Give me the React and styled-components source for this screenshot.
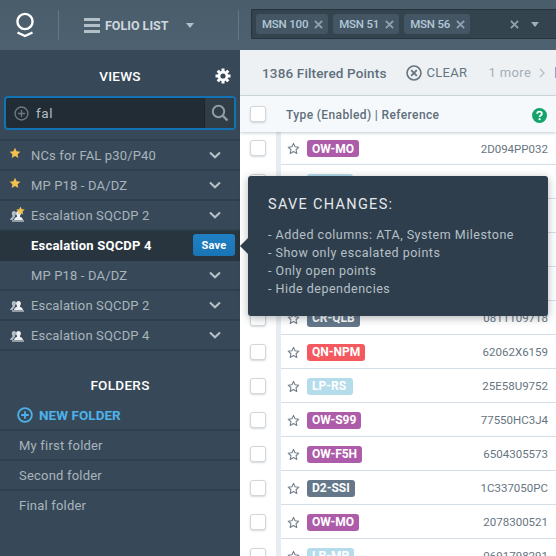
import React from 'react';
import styled, { createGlobalStyle } from 'styled-components';

const GlobalStyle = createGlobalStyle`
  html, body { margin: 0; padding: 0; height: 100%; overflow: hidden; }
  body { font-family: Roboto, "Liberation Sans", sans-serif; background: #fff; }
`;

const Shell = styled.div`
  position: relative;
  width: 556px;
  height: 556px;
  overflow: hidden;
  display: flex;
  flex-direction: column;
`;

/* top bar */
const TopBar = styled.header`
  height: 50px;
  flex: none;
  display: flex;
  align-items: center;
  background: linear-gradient(#4a5d6b, #4e6170);
`;
const LogoCell = styled.div`
  width: 59px;
  height: 30px;
  flex: none;
  display: flex;
  align-items: center;
  padding-left: 15px;
  box-sizing: border-box;
  border-right: 1px solid #647683;
`;
const FolioCell = styled.div`
  width: 180px;
  height: 30px;
  flex: none;
  box-sizing: border-box;
  display: flex;
  align-items: center;
  padding-left: 25px;
  border-right: 1px solid #647683;
`;
const Burger = styled.span`
  width: 16px;
  height: 15px;
  flex: none;
  background: linear-gradient(#b4c0c9 3px, transparent 3px 6px, #b4c0c9 6px 9px, transparent 9px 12px, #b4c0c9 12px);
`;
const FolioLabel = styled.span`
  margin-left: 5px;
  font-size: 12.5px;
  font-weight: 700;
  color: #cfd8df;
  white-space: nowrap;
`;
const Caret = styled.span`
  width: 0;
  height: 0;
  flex: none;
  border-left: 4px solid transparent;
  border-right: 4px solid transparent;
  border-top: 5px solid ${p => p.$color || '#b4c0c9'};
  margin-left: ${p => p.$gap || 0}px;
`;
const MultiSelect = styled.div`
  margin-left: 12px;
  flex: 1;
  height: 30px;
  box-sizing: border-box;
  margin-top: -2px;
  display: flex;
  align-items: center;
  gap: 5px;
  padding-left: 4px;
  background: #34444f;
  border: 1px solid #27343e;
  border-right: none;
  border-radius: 2px 0 0 2px;
`;
const Chip = styled.span`
  height: 20px;
  display: flex;
  align-items: center;
  gap: 6px;
  padding: 0 5px 0 6px;
  border-radius: 3px;
  background: #445664;
  color: #b3c8d8;
  font-size: 11.5px;
  font-weight: 500;
  letter-spacing: -0.2px;
  white-space: nowrap;
`;
const ClearAll = styled.span`
  display: flex;
  margin-left: 35px;
`;

/* body */
const Body = styled.div`
  flex: 1;
  min-height: 0;
  display: flex;
`;
const Sidebar = styled.aside`
  width: 240px;
  flex: none;
  background: #374958;
  display: flex;
  flex-direction: column;
`;
const SideHead = styled.div`
  height: 46px;
  flex: none;
  box-sizing: border-box;
  position: relative;
  display: flex;
  align-items: center;
  justify-content: center;
  padding-top: 6px;
  color: #fff;
  font-size: 13.5px;
  font-weight: 500;
  letter-spacing: 0.3px;
`;
const GearSlot = styled.span`
  position: absolute;
  left: 215px;
  top: 18px;
  display: flex;
`;
const Search = styled.div`
  height: 34px;
  margin: 0 4px;
  box-sizing: border-box;
  flex: none;
  display: flex;
  align-items: center;
  border: 2px solid #1272b3;
  border-radius: 4px;
  background: #212c35;
  overflow: hidden;
`;
const SearchText = styled.span`
  flex: 1;
  margin-left: 8px;
  display: flex;
  align-items: center;
  gap: 7px;
  color: #b3bcc3;
  font-size: 13.5px;
  letter-spacing: 0.6px;
`;
const SearchButton = styled.span`
  width: 29px;
  height: 30px;
  display: flex;
  align-items: center;
  justify-content: center;
  background: #303d47;
  border-left: 1px solid #1d272f;
`;
const Views = styled.div`
  margin-top: 9px;
  border-top: 2px solid #2f404d;
  flex: none;
`;
const ViewRow = styled.div`
  height: 30px;
  box-sizing: border-box;
  display: flex;
  align-items: center;
  position: relative;
  padding-left: 31px;
  border-bottom: 2px solid ${p => (p.$active ? '#28353f' : '#2f404d')};
  background: ${p => (p.$active ? '#28353f' : 'transparent')};
  color: ${p => (p.$active ? '#fff' : '#a9b4bc')};
  font-size: 13px;
  font-weight: ${p => (p.$active ? 700 : 400)};
  letter-spacing: ${p => (p.$active ? 0.22 : 0.15)}px;
  white-space: nowrap;
`;
const ViewIcon = styled.span`
  position: absolute;
  left: 9px;
  top: 6px;
  width: 16px;
  height: 16px;
  display: flex;
`;
const Chevron = styled.span`
  position: absolute;
  left: 209px;
  top: 10px;
  display: flex;
`;
const SaveButton = styled.span`
  position: absolute;
  left: 193px;
  top: 3px;
  width: 42px;
  height: 22px;
  border-radius: 3px;
  display: flex;
  align-items: center;
  justify-content: center;
  background: linear-gradient(#2081c4, #1a74b4);
  color: #fff;
  font-size: 11px;
  font-weight: 700;
  letter-spacing: 0.2px;
`;
const FolderHead = styled(SideHead)`
  margin-top: 20px;
  height: 30px;
  padding: 0 0 2px;
`;
const NewFolder = styled.div`
  height: 30px;
  box-sizing: border-box;
  display: flex;
  align-items: center;
  gap: 6px;
  padding-left: 17px;
  border-bottom: 2px solid #2f404d;
  color: #4db2ea;
  font-size: 13.5px;
  font-weight: 700;
  letter-spacing: 0.05px;
`;
const FolderRow = styled.div`
  height: 30px;
  box-sizing: border-box;
  display: flex;
  align-items: center;
  padding-left: 19px;
  border-bottom: 2px solid ${p => (p.$last ? 'transparent' : '#2f404d')};
  color: #a9b4bc;
  font-size: 13px;
  letter-spacing: 0.2px;
`;

/* list */
const Main = styled.main`
  flex: 1;
  min-width: 0;
  display: flex;
  flex-direction: column;
`;
const Toolbar = styled.div`
  height: 46px;
  flex: none;
  box-sizing: border-box;
  display: flex;
  align-items: center;
  padding-left: 22px;
  background: #edf1f4;
  border-bottom: 1px solid #d3dce3;
  white-space: nowrap;
  overflow: hidden;
`;
const Count = styled.span`
  font-size: 13.5px;
  font-weight: 500;
  color: #5f6f7c;
  letter-spacing: 0.15px;
`;
const ClearIcon = styled.span`
  display: flex;
  margin-left: 19px;
`;
const ClearLabel = styled.span`
  margin-left: 5px;
  font-size: 13px;
  color: #66757f;
  letter-spacing: 0.3px;
`;
const More = styled.span`
  margin-left: 21px;
  font-size: 13px;
  color: #a3afb8;
  letter-spacing: 0.4px;
`;
const MoreArrow = styled.span`
  display: flex;
  margin-left: 8px;
`;
const MoreLink = styled.span`
  margin-left: 9px;
  font-size: 14px;
  font-weight: 500;
  color: #1c8ad0;
`;
const HeadRow = styled.div`
  height: 36px;
  flex: none;
  display: flex;
  align-items: center;
  position: relative;
  z-index: 1;
  background: #f6f9fb;
  box-shadow: 0 1px 3px rgba(60, 80, 95, 0.3);
`;
const Check = styled.span`
  width: 14px;
  height: 14px;
  flex: none;
  margin: -1px 0 0 10px;
  background: #fff;
  border: 1px solid #d2d7db;
  border-radius: 3px;
  box-shadow: 0 1px 2px rgba(60, 80, 95, 0.22);
`;
const HeadLabel = styled.span`
  margin: 2px 0 0 20px;
  flex: 1;
  font-size: 12px;
  font-weight: 500;
  color: #5f6f7c;
  letter-spacing: 0.38px;
  white-space: nowrap;
`;
const Help = styled.span`
  display: flex;
  margin: 2px 9px 0 0;
`;
const Rows = styled.div`
  flex: 1;
  overflow: hidden;
`;
const Row = styled.div`
  height: 34px;
  display: flex;
  align-items: center;
  &:first-child { height: 33px; }
`;
const Strip = styled.span`
  width: 5px;
  align-self: stretch;
  flex: none;
  margin-left: 10px;
  background: #e6ecf1;
`;
const RowBody = styled.div`
  flex: 1;
  align-self: stretch;
  min-width: 0;
  box-sizing: border-box;
  display: flex;
  align-items: center;
  padding: 1px 8px 0 6px;
  border-bottom: 1px solid #d5dee6;
`;
const StarSlot = styled.span`
  display: flex;
  margin-right: 7px;
`;
const Tag = styled.span`
  height: 17px;
  min-width: 46px;
  box-sizing: border-box;
  display: flex;
  align-items: center;
  padding: 0 5px;
  border-radius: 3px;
  background: ${p => p.$bg};
  color: #fff;
  font-size: 12px;
  font-weight: 700;
`;
const Code = styled.span`
  margin-left: auto;
  font-size: 11.5px;
  color: #67757f;
`;

/* tooltip */
const Tip = styled.div`
  position: absolute;
  left: 248px;
  top: 176px;
  width: 300px;
  height: 140px;
  box-sizing: border-box;
  z-index: 3;
  padding: 19px 20px;
  border-radius: 3px;
  background: #2f3e4c;
  box-shadow: 0 2px 8px rgba(30, 40, 50, 0.35);
  color: #b6c0c8;
  font-size: 12.5px;
  line-height: 18px;
  letter-spacing: 0.5px;
  &::before {
    content: '';
    position: absolute;
    left: -8px;
    top: 62px;
    border-top: 8px solid transparent;
    border-bottom: 8px solid transparent;
    border-right: 8px solid #2f3e4c;
  }
`;
const TipTitle = styled.div`
  font-size: 14.5px;
  line-height: 20px;
  color: #e4e9ed;
  letter-spacing: 1.3px;
  margin-bottom: 11px;
`;

const Logo = () => (
  <svg width="22" height="26" viewBox="0 0 22 26" fill="none" stroke="#fff">
    <circle cx="10" cy="9.5" r="7.6" strokeWidth="2.4" />
    <path d="M2.5 20.5 L10 24 L17.5 20.5" strokeWidth="2.4" />
  </svg>
);
const Cross = ({ size = 9, color = '#8ea0ae' }) => (
  <svg width={size} height={size} viewBox="0 0 10 10" stroke={color} strokeWidth="2.2">
    <path d="M1 1 L9 9 M9 1 L1 9" />
  </svg>
);
const Gear = () => (
  <svg width="16" height="16" viewBox="0 0 16 16" fill="none" stroke="#fff">
    <circle cx="8" cy="8" r="4" strokeWidth="2.8" />
    <path d="M8 0.5V3 M8 13V15.5 M0.5 8H3 M13 8H15.5 M2.7 2.7L4.4 4.4 M11.6 11.6L13.3 13.3 M13.3 2.7L11.6 4.4 M4.4 11.6L2.7 13.3" strokeWidth="3" />
  </svg>
);
const PlusCircle = ({ size = 15, color = '#6c7881', width = 1.5 }) => (
  <svg width={size} height={size} viewBox="0 0 16 16" fill="none" stroke={color} strokeWidth={width}>
    <circle cx="8" cy="8" r="6.9" />
    <path d="M8 4.2V11.8 M4.2 8H11.8" />
  </svg>
);
const Glass = () => (
  <svg width="18" height="18" viewBox="0 0 18 18" fill="none" stroke="#8f9ca6" strokeWidth="2">
    <circle cx="7.5" cy="7.5" r="5.7" />
    <path d="M11.7 11.7L16.5 16.5" strokeWidth="2.4" />
  </svg>
);
const Star = ({ size = 11, color = '#f2c14e' }) => (
  <svg width={size} height={size} viewBox="0 0 24 24" fill={color}>
    <path d="M12 1.5l3.2 6.9 7.5.9-5.5 5.1 1.4 7.4L12 18.1l-6.6 3.7 1.4-7.4L1.300 9.300l7.500-.9z" />
  </svg>
);
const OutlineStar = () => (
  <svg width="13" height="13" viewBox="0 0 24 24" fill="none" stroke="#6f7e8b" strokeWidth="2" strokeLinejoin="round">
    <path d="M12 2.500l2.900 6.300 6.900.8-5.100 4.700 1.400 6.800-6.100-3.400-6.100 3.400 1.400-6.800-5.100-4.700 6.900-.8z" />
  </svg>
);
const People = ({ star }) => (
  <svg width="16" height="16" viewBox="0 0 16 16">
    <path fill="#b5bec5" d="M5 4c1.400 0 2 1 2 2.200 0 1-.5 1.800-1 2.300v1L3.500 13H1c.4-1.500 1.400-2.300 2.400-3V8.500C3 8 2.800 7.200 2.800 6.200 2.800 5 3.600 4 5 4z" />
    <path fill="#eef1f3" d="M9.500 4c1.500 0 2.400 1.100 2.400 2.500 0 1-.4 1.800-.9 2.300v1c1.300.5 2.700 1.100 3 3.200H5c.3-2.100 1.700-2.700 3-3.200v-1c-.5-.5-.9-1.300-.9-2.300C7.100 5.100 8 4 9.500 4z" />
    <path fill="#eef1f3" d="M3 13.500h12v1H3z" />
    {star && (
      <path fill="#f2c14e" d="M11.500-.500l1.300 2.700 3 .4-2.200 2 .6 3-2.700-1.500-2.700 1.500.6-3-2.200-2 3-.4z" />
    )}
  </svg>
);
const Down = () => (
  <svg width="12" height="8" viewBox="0 0 12 8" fill="none" stroke="#b7c1c8" strokeWidth="2">
    <path d="M1 1.500L6 6.300L11 1.500" />
  </svg>
);
const CircleX = () => (
  <svg width="16" height="16" viewBox="0 0 17 17" fill="none" stroke="#66757f" strokeWidth="1.700">
    <circle cx="8.500" cy="8.500" r="7.400" />
    <path d="M5.500 5.500L11.500 11.500 M11.500 5.500L5.500 11.500" strokeWidth="2" />
  </svg>
);
const Right = () => (
  <svg width="6" height="10" viewBox="0 0 6 10" fill="none" stroke="#b4bec6" strokeWidth="1.300">
    <path d="M1 1L5 5L1 9" />
  </svg>
);
const HelpIcon = () => (
  <svg width="15" height="15" viewBox="0 0 15 15">
    <circle cx="7.500" cy="7.500" r="7.500" fill="#14a36b" />
    <path d="M5.200 5.800C5.200 4.500 6.200 3.700 7.500 3.700C8.900 3.700 9.900 4.500 9.900 5.700C9.900 7.300 7.600 7.300 7.600 9" fill="none" stroke="#fff" strokeWidth="1.800" />
    <circle cx="7.600" cy="11.200" r="1.100" fill="#fff" />
  </svg>
);

const chips = ['MSN 100', 'MSN 51', 'MSN 56'];

const views = [
  { label: 'NCs for FAL p30/P40', icon: 'star' },
  { label: 'MP P18 - DA/DZ', icon: 'star' },
  { label: 'Escalation SQCDP 2', icon: 'sharedStar' },
  { label: 'Escalation SQCDP 4', active: true },
  { label: 'MP P18 - DA/DZ' },
  { label: 'Escalation SQCDP 2', icon: 'shared' },
  { label: 'Escalation SQCDP 4', icon: 'shared' },
];

const folders = ['My first folder', 'Second folder', 'Final folder'];

const PURPLE = '#ad5ca9';
const BLUE = '#b5dcea';
const SLATE = '#64788a';
const RED = '#f4595f';

// rows 3 to 5 sit fully under the tooltip, row 2 only shows the top of its tag
const points = [
  { tag: 'OW-MO', bg: PURPLE, code: '2D094PP032' },
  { tag: '', bg: BLUE, code: '' },
  {},
  {},
  {},
  { tag: 'CR-QLB', bg: SLATE, code: '0811109718' },
  { tag: 'QN-NPM', bg: RED, code: '62062X6159' },
  { tag: 'LP-RS', bg: BLUE, code: '25E58U9752' },
  { tag: 'OW-S99', bg: PURPLE, code: '77550HC3J4' },
  { tag: 'OW-F5H', bg: PURPLE, code: '6504305573' },
  { tag: 'D2-SSI', bg: SLATE, code: '1C337050PC' },
  { tag: 'OW-MO', bg: PURPLE, code: '2078300521' },
  { tag: 'LP-MP', bg: BLUE, code: '0691798291' },
];

const viewIcon = icon => {
  if (icon === 'star') return <Star size={12} />;
  if (icon === 'shared') return <People />;
  if (icon === 'sharedStar') return <People star />;
  return null;
};

export default function App() {
  return (
    <>
      <GlobalStyle />
      <Shell>
        <TopBar>
          <LogoCell><Logo /></LogoCell>
          <FolioCell>
            <Burger />
            <FolioLabel>FOLIO LIST</FolioLabel>
            <Caret $gap={18} />
          </FolioCell>
          <MultiSelect>
            {chips.map(chip => (
              <Chip key={chip}>{chip}<Cross /></Chip>
            ))}
            <ClearAll><Cross /></ClearAll>
            <Caret $gap={7} $color="#9fb0bd" />
          </MultiSelect>
        </TopBar>
        <Body>
          <Sidebar>
            <SideHead>
              VIEWS
              <GearSlot><Gear /></GearSlot>
            </SideHead>
            <Search>
              <SearchText><PlusCircle />fal</SearchText>
              <SearchButton><Glass /></SearchButton>
            </Search>
            <Views>
              {views.map((view, i) => (
                <ViewRow key={i} $active={view.active}>
                  {view.icon && <ViewIcon>{viewIcon(view.icon)}</ViewIcon>}
                  {view.label}
                  {view.active
                    ? <SaveButton>Save</SaveButton>
                    : <Chevron><Down /></Chevron>}
                </ViewRow>
              ))}
            </Views>
            <FolderHead>FOLDERS</FolderHead>
            <NewFolder>
              <PlusCircle size={16} color="#4db2ea" width={1.800} />
              NEW FOLDER
            </NewFolder>
            {folders.map((folder, i) => (
              <FolderRow key={folder} $last={i === folders.length - 1}>{folder}</FolderRow>
            ))}
          </Sidebar>
          <Main>
            <Toolbar>
              <Count>1386 Filtered Points</Count>
              <ClearIcon><CircleX /></ClearIcon>
              <ClearLabel>CLEAR</ClearLabel>
              <More>1 more</More>
              <MoreArrow><Right /></MoreArrow>
              <MoreLink>NCs</MoreLink>
            </Toolbar>
            <HeadRow>
              <Check />
              <HeadLabel>Type (Enabled) | Reference</HeadLabel>
              <Help><HelpIcon /></Help>
            </HeadRow>
            <Rows>
              {points.map((point, i) => (
                <Row key={i}>
                  <Check />
                  <Strip />
                  <RowBody>
                    {point.bg && <StarSlot><OutlineStar /></StarSlot>}
                    {point.bg && <Tag $bg={point.bg}>{point.tag}</Tag>}
                    {point.code && <Code>{point.code}</Code>}
                  </RowBody>
                </Row>
              ))}
            </Rows>
          </Main>
        </Body>
        <Tip>
          <TipTitle>SAVE CHANGES:</TipTitle>
          <div>- Added columns: ATA, System Milestone</div>
          <div>- Show only escalated points</div>
          <div>- Only open points</div>
          <div>- Hide dependencies</div>
        </Tip>
      </Shell>
    </>
  );
}
